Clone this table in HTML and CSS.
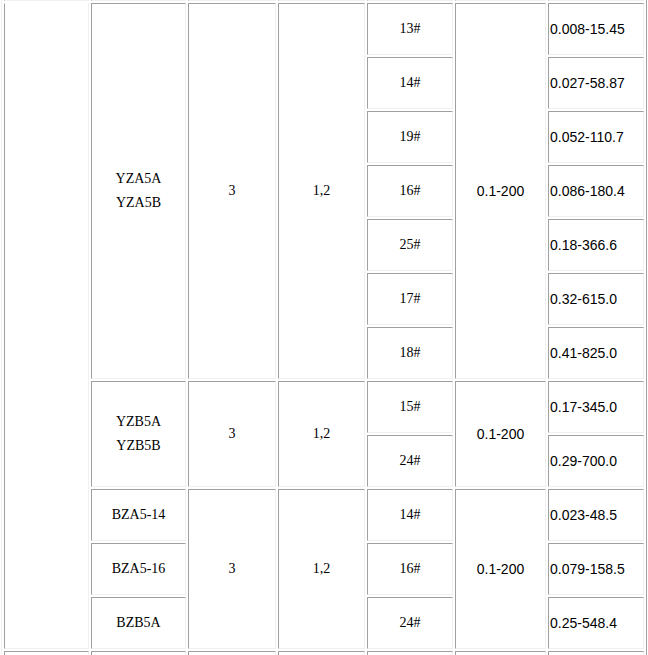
FILE: index.html
```html
<!DOCTYPE html>
<html>
<head>
<meta charset="utf-8">
<link rel="stylesheet" href="styles.css">
</head>
<body>
<div class="viewport">
<table class="spec">
<colgroup>
<col class="c1"><col class="c2"><col class="c3"><col class="c4"><col class="c5"><col class="c6"><col class="c7">
</colgroup>
<tbody>
<tr class="prev"><td></td><td></td><td></td><td></td><td></td><td></td><td></td></tr>
<tr>
<td class="blank" rowspan="12"></td>
<td class="serif two" rowspan="7">YZA5A<br>YZA5B</td>
<td class="serif" rowspan="7">3</td>
<td class="serif" rowspan="7">1,2</td>
<td class="serif">13#</td>
<td class="sans" rowspan="7">0.1-200</td>
<td class="val">0.008-15.45</td>
</tr>
<tr><td class="serif">14#</td><td class="val">0.027-58.87</td></tr>
<tr><td class="serif">19#</td><td class="val">0.052-110.7</td></tr>
<tr><td class="serif">16#</td><td class="val">0.086-180.4</td></tr>
<tr><td class="serif">25#</td><td class="val">0.18-366.6</td></tr>
<tr><td class="serif">17#</td><td class="val">0.32-615.0</td></tr>
<tr><td class="serif">18#</td><td class="val">0.41-825.0</td></tr>
<tr>
<td class="serif two" rowspan="2">YZB5A<br>YZB5B</td>
<td class="serif" rowspan="2">3</td>
<td class="serif" rowspan="2">1,2</td>
<td class="serif">15#</td>
<td class="sans" rowspan="2">0.1-200</td>
<td class="val">0.17-345.0</td>
</tr>
<tr><td class="serif">24#</td><td class="val">0.29-700.0</td></tr>
<tr>
<td class="serif">BZA5-14</td>
<td class="serif" rowspan="3">3</td>
<td class="serif" rowspan="3">1,2</td>
<td class="serif">14#</td>
<td class="sans" rowspan="3">0.1-200</td>
<td class="val">0.023-48.5</td>
</tr>
<tr><td class="serif">BZA5-16</td><td class="serif">16#</td><td class="val">0.079-158.5</td></tr>
<tr><td class="serif">BZB5A</td><td class="serif">24#</td><td class="val">0.25-548.4</td></tr>
<tr class="next"><td></td><td></td><td></td><td></td><td></td><td></td><td></td></tr>
</tbody>
</table>
</div>
</body>
</html>
```

FILE: styles.css
```css
html, body {
  margin: 0;
  padding: 0;
  background: #ffffff;
}

.viewport {
  height: 655px;
  overflow: hidden;
}

.spec {
  margin: -54px 0 0 1px;
  width: 646px;
  table-layout: fixed;
  border-collapse: separate;
  border-spacing: 2px;
  border-style: solid;
  border-width: 1px;
  border-color: #f0f0f0 #a0a0a0 #a0a0a0 #f0f0f0;
  font-family: "Liberation Serif", "Times New Roman", serif;
  font-size: 14px;
  color: #000000;
}

.c1 { width: 85px; }
.c2 { width: 95px; }
.c3 { width: 88px; }
.c4 { width: 87px; }
.c5 { width: 86px; }
.c6 { width: 91px; }
.c7 { width: 96px; }

.spec td {
  box-sizing: border-box;
  height: 52px;
  padding: 1px;
  border-style: solid;
  border-width: 1px;
  border-color: #a0a0a0 #f0f0f0 #f0f0f0 #a0a0a0;
  vertical-align: middle;
}

.spec .blank {
  border-top-color: #ffffff;
}

.serif {
  text-align: center;
  font-family: "Liberation Serif", "Times New Roman", serif;
  font-size: 14px;
}

.two {
  line-height: 24px;
}

.sans {
  text-align: center;
  font-family: "Liberation Sans", Arial, sans-serif;
  font-size: 14px;
}

.val {
  text-align: left;
  font-family: "Liberation Sans", Arial, sans-serif;
  font-size: 14px;
}
```
